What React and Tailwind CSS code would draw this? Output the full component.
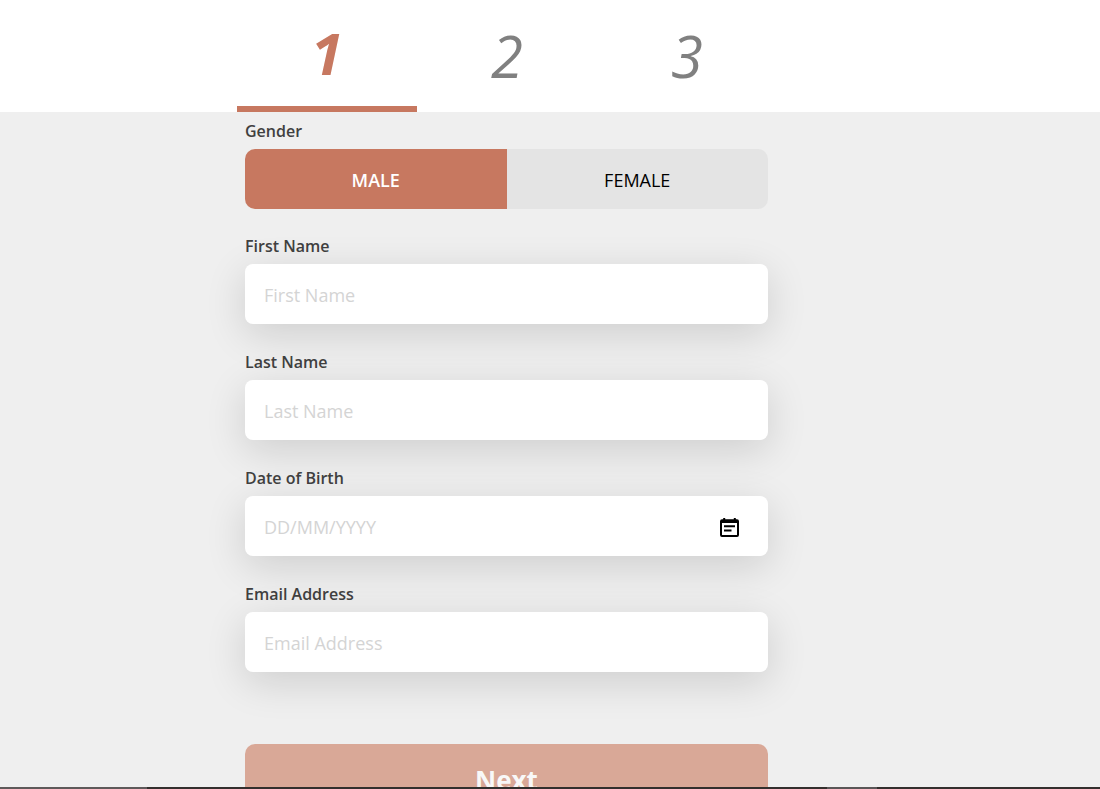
import { useState } from 'react';
import clsx from 'clsx';

const steps = [1, 2, 3];

const genders = [
  { id: 'male', name: 'MALE' },
  { id: 'female', name: 'FEMALE' },
];

const fields = [
  { id: 'firstName', label: 'First Name', placeholder: 'First Name', type: 'text' },
  { id: 'lastName', label: 'Last Name', placeholder: 'Last Name', type: 'text' },
  { id: 'dob', label: 'Date of Birth', placeholder: 'DD/MM/YYYY', type: 'text', calendar: true },
  { id: 'email', label: 'Email Address', placeholder: 'Email Address', type: 'email' },
];

function CalendarIcon() {
  return (
    <svg width="20" height="20" viewBox="0 0 20 20" aria-hidden="true">
      <path
        fillRule="evenodd"
        d="M3.2 0h2v1.200h8.600V0h2v1.200h1.200A2 2 0 0 1 19 3.200V17a2 2 0 0 1-2 2H2a2 2 0 0 1-2-2V3.200A2 2 0 0 1 2 1.200h1.200zM2 5v12h15V5z"
      />
      <path d="M4 7.300h11v2H4zM4 11.500h7.500v2H4z" />
    </svg>
  );
}

function StepTabs({ step, onChange }) {
  return (
    <header className="shrink-0 bg-white pr-[86px]">
      <nav className="mx-auto flex max-w-[540px]" aria-label="Steps">
        {steps.map((n) => (
          <button
            key={n}
            type="button"
            onClick={() => onChange(n)}
            className={clsx(
              'h-28 flex-1 text-[58px] leading-none italic',
              n === step ? 'border-b-6 border-[#c77860] font-bold text-[#c77860]' : 'text-[#808080]'
            )}
          >
            {n}
          </button>
        ))}
      </nav>
    </header>
  );
}

function Field({ field }) {
  return (
    <div className="flex flex-col gap-1.5">
      <label htmlFor={field.id} className="text-base leading-6 font-semibold text-[#404040]">
        {field.label}
      </label>
      <div className="flex h-[60px] items-center rounded-lg bg-white pt-0.5 pr-7 pl-[19px] shadow-[0_10px_40px_rgba(0,0,0,0.14)]">
        <input
          id={field.id}
          name={field.id}
          type={field.type}
          placeholder={field.placeholder}
          className="min-w-0 flex-1 bg-transparent text-lg text-[#404040] outline-none placeholder:text-[#d4d4d4]"
        />
        {field.calendar && (
          <button type="button" aria-label="Pick a date" className="pt-0.5">
            <CalendarIcon />
          </button>
        )}
      </div>
    </div>
  );
}

export default function App() {
  const [step, setStep] = useState(1);
  const [gender, setGender] = useState('male');

  return (
    <div className="flex h-screen flex-col bg-[#efefef] font-['Open_Sans','Noto_Sans',sans-serif]">
      <StepTabs step={step} onChange={setStep} />

      <main className="min-h-0 flex-1 overflow-y-auto pr-[86px] [scrollbar-width:none]">
        <form
          className="mx-auto flex max-w-[540px] flex-col pt-[7px] pr-[9px] pb-8 pl-2"
          onSubmit={(e) => e.preventDefault()}
        >
          <div className="flex flex-col gap-1.5" role="group" aria-labelledby="gender-label">
            <span id="gender-label" className="text-base leading-6 font-semibold text-[#404040]">
              Gender
            </span>
            <div className="flex h-[60px] overflow-hidden rounded-[10px]">
              {genders.map((g) => (
                <button
                  key={g.id}
                  type="button"
                  aria-pressed={gender === g.id}
                  onClick={() => setGender(g.id)}
                  className={clsx(
                    'flex-1 pt-0.5 text-lg',
                    gender === g.id ? 'bg-[#c77860] font-semibold text-white' : 'bg-[#e4e4e4] text-black'
                  )}
                >
                  {g.name}
                </button>
              ))}
            </div>
          </div>

          <div className="mt-[25px] flex flex-col gap-[26px]">
            {fields.map((field) => (
              <Field key={field.id} field={field} />
            ))}
          </div>

          <button
            type="submit"
            className="mt-18 h-[72px] rounded-[10px] bg-[#d9a897] text-[26px] font-bold text-[#f8f8f8]"
          >
            Next
          </button>
        </form>
      </main>

      {/* Dark edge under the page */}
      <div className="flex h-0.5 shrink-0 bg-[#332f2d]">
        <div className="w-[13.4%] bg-[#5e595a]" />
        <div className="w-[61.8%]" />
        <div className="w-[4.5%] bg-[#5a5657]" />
      </div>
    </div>
  );
}
